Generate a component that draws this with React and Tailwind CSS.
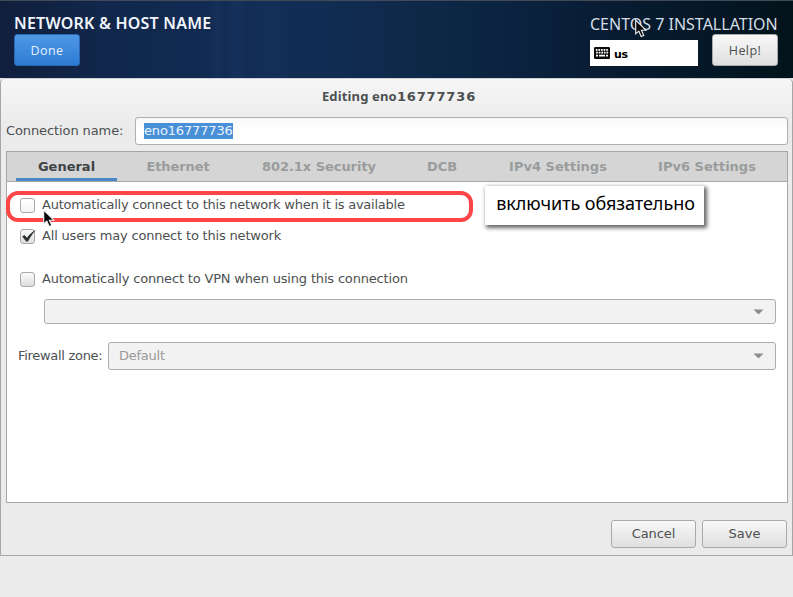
import React from "react";

const raised =
  "flex items-center justify-center rounded-[3px] border border-[#a9a9a9] bg-linear-to-b from-[#f8f8f8] to-[#dfdfdf]";

function Pointer({ className }) {
  return (
    <svg className={className} width="13" height="19" viewBox="0 0 13 19">
      <path
        d="M.7 1v13.800l3.100-2.700 2.400 5.400 2.600-1.100-2.400-5.200h4.500z"
        fill="#0a0a0a"
        stroke="#f4f4f4"
        strokeWidth="1.1"
      />
    </svg>
  );
}

function Keyboard() {
  const keys = [];
  for (let r = 0; r < 2; r++)
    for (let c = 0; c < 5; c++)
      keys.push(<rect key={`${r}-${c}`} x={1.8 + c * 2.6 + r * 0.3} y={2 + r * 2.7} width="1.7" height="1.8" fill="#fff" />);
  return (
    <svg className="-mt-[1px]" width="16" height="12" viewBox="0 0 16 12">
      <rect width="16" height="12" rx="1.3" fill="#0b0b0b" />
      {keys}
      <path d="M2 7.700h2v1.900H2zM5 7.700h6v1.900H5zM12 7.700h2v1.900h-2z" fill="#fff" />
    </svg>
  );
}

function Check({ checked, label, labelClass, plain }) {
  return (
    <div className="flex h-[20px] items-center">
      <span
        className={
          "relative mt-[2px] h-[15px] w-[15px] shrink-0 rounded-[3px] border border-[#a9a9a9] bg-linear-to-b " +
          (plain ? "from-white to-[#f4f4f4]" : "from-[#fafafa] to-[#dedede]")
        }
      >
        {checked && (
          <svg className="absolute -left-px -top-px" width="17" height="15" viewBox="0 0 17 15">
            <path d="M2.200 7.600 4.300 6 7 8.700C9.500 5.500 12.300 2.600 16 .8 13 4.200 10.400 7.800 7.900 12.600H6.200z" fill="#2e3436" />
          </svg>
        )}
      </span>
      <span className={"ml-[7px] mt-[1px] whitespace-nowrap " + labelClass}>{label}</span>
    </div>
  );
}

function Combo({ className, children }) {
  return (
    <div className={"flex items-center justify-between rounded-[3px] border border-[#adadad] bg-[#f2f2f2] pl-[10px] pr-[11px] tracking-[-0.25px] text-[#9a9a9a] " + className}>
      <span>{children}</span>
      <svg width="11" height="6" viewBox="0 0 11 6">
        <path d="M.5.5h10l-4.500 4.500h-1z" fill="#8a8d8d" />
      </svg>
    </div>
  );
}

const tabs = [
  ["General", "w-[101px] border-b-[3px] border-[#4a86c8] pt-[3px] text-[#3f4344]"],
  ["Ethernet", "w-[122px] tracking-[-0.1px]"],
  ["802.1x Security", "w-[160px] tracking-[-0.05px]"],
  ["DCB", "w-[86px]"],
  ["IPv4 Settings", "w-[146px]"],
  ["IPv6 Settings", "w-[152px]"],
];

export default function App() {
  return (
    <div className="relative flex h-[597px] w-[793px] flex-col overflow-hidden bg-[#ebebeb] font-['DejaVu_Sans',sans-serif] text-[13px] leading-[18px] text-[#4c5051]">
      <header className="flex h-[78px] shrink-0 justify-between border-t border-[#414b57] bg-[linear-gradient(90deg,transparent_208px,rgba(60,110,170,0.06)_217px,transparent_226px,rgba(60,110,170,0.07)_236px,transparent_246px,rgba(60,110,170,0.05)_275px,transparent_290px),linear-gradient(90deg,#101f3c_0px,#11274b_100px,#122c55_240px,#112d53_320px,#0e2848_420px,#0b2340_510px,#091e36_580px,#05192a_680px,#02131a_793px)] pl-[14px] pr-[15px] font-['Noto_Sans',sans-serif]">
        <div className="pt-[13px]">
          <h1 className="whitespace-nowrap text-[16px] font-semibold leading-[18px] tracking-[0.22px] text-[#f0f5fb]">NETWORK &amp; HOST NAME</h1>
          <button className="mt-[2px] flex h-[32px] w-[66px] items-center justify-center rounded-[3px] border border-[#2a68b3] bg-linear-to-b from-[#4f98e3] to-[#2c7bd4] pt-[1px] font-['Open_Sans',sans-serif] text-[12.5px] tracking-[0.4px] text-[#e5f0fb]">
            Done
          </button>
        </div>
        <div className="w-[188px] pt-[14px]">
          <div className="whitespace-nowrap text-[16px] leading-[18px] text-[#d5dee6]">CENTOS 7 INSTALLATION</div>
          <div className="mt-[1px] flex justify-between">
            <div className="mt-[6px] flex h-[26px] w-[108px] items-center gap-[4px] bg-white pl-[4px] text-black">
              <Keyboard />
              <span className="pt-[3px] font-['DejaVu_Sans',sans-serif] text-[11px] font-bold tracking-[-0.3px]">us</span>
            </div>
            <button className={"h-[32px] w-[66px] pt-[1px] font-['Open_Sans',sans-serif] text-[12.5px] tracking-[0.4px] " + raised}>Help!</button>
          </div>
        </div>
      </header>

      <main className="flex h-[478px] shrink-0 flex-col rounded-t-[5px] border border-[#a6a6a6] border-t-[#cfd2d5] bg-linear-to-b from-[#f6f6f6] via-[#ebebeb] via-10% to-[#ebebeb] px-[5px]">
        <h2 className="mt-[8px] flex h-[18px] items-baseline justify-center whitespace-pre pl-[5px] font-bold">
          <span className="font-['Noto_Sans',sans-serif] text-[13px] tracking-[0.15px]">Editing eno</span>
          <span className="tracking-[0.85px]">16777736</span>
        </h2>
        <div className="-mr-px mt-[12px] flex h-[28px] items-center justify-between">
          <label className="whitespace-nowrap tracking-[-0.1px]">Connection name:</label>
          <div className="flex h-[28px] w-[653px] items-center rounded-[3px] border border-[#adb0b3] bg-linear-to-b from-[#f8f8f8] to-white to-40% pl-[8px]">
            <span className="bg-[#4a90d9] leading-[16px] tracking-[-0.15px] text-[#eaf3fc]">eno16777736</span>
          </div>
        </div>

        <section className="mt-[6px] flex h-[352px] w-[782px] flex-col border border-[#a6a6a6] bg-white">
          <nav className="flex h-[30px] shrink-0 border-b border-[#a6a6a6] bg-[#d5d5d5] pl-[9px] font-bold text-[#999c9c]">
            {tabs.map(([name, cls]) => (
              <div key={name} className={"flex items-center justify-center whitespace-nowrap " + cls}>{name}</div>
            ))}
          </nav>
          <div className="flex flex-col pl-[13px] pr-[11px] pt-[12px]">
            <Check plain label="Automatically connect to this network when it is available" labelClass="tracking-[-0.245px]" />
            <div className="mt-[11px]"><Check checked label="All users may connect to this network" labelClass="tracking-[-0.18px]" /></div>
            <div className="mt-[23px]"><Check label="Automatically connect to VPN when using this connection" labelClass="tracking-[-0.175px]" /></div>
            <Combo className="ml-[24px] mt-[11px] h-[25px]" />
            <div className="-ml-[2px] mt-[18px] flex items-center justify-between">
              <label className="whitespace-nowrap tracking-[-0.3px]">Firewall zone:</label>
              <Combo className="h-[28px] w-[668px]">Default</Combo>
            </div>
          </div>
        </section>

        <div className="mt-[17px] flex justify-end gap-[6px]">
          <button className={"h-[28px] w-[85px] tracking-[-0.1px] " + raised}>Cancel</button>
          <button className={"h-[28px] w-[85px] " + raised}>Save</button>
        </div>
      </main>

      <div className="absolute left-[6px] top-[191px] h-[31px] w-[467px] rounded-[12px] border-4 border-[#ff4545]" />
      <div className="absolute left-[485px] top-[186px] flex h-[39px] w-[219px] items-center justify-center whitespace-nowrap bg-white pb-[5px] pl-[2px] font-['Noto_Sans',sans-serif] text-[18px] tracking-[-0.05px] text-black shadow-[2px_2px_4px_1px_rgba(0,0,0,0.6)]">
        включить обязательно
      </div>
      <Pointer className="absolute left-[635px] top-[19px]" />
      <Pointer className="absolute left-[43px] top-[209px]" />
    </div>
  );
}
